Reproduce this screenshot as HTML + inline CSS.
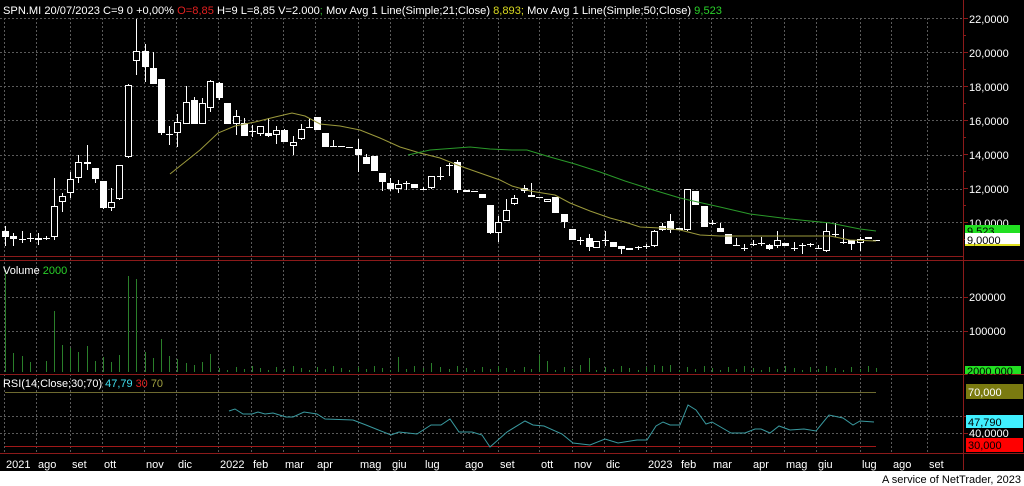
<!DOCTYPE html>
<html><head><meta charset="utf-8"><style>
html,body{margin:0;padding:0;background:#000;width:1024px;height:486px;overflow:hidden}
svg{display:block}
text{font-family:"Liberation Sans",sans-serif;font-size:11px}
</style></head><body>
<svg id="s" width="1024" height="486" viewBox="0 0 1024 486" xmlns="http://www.w3.org/2000/svg">
<rect width="1024" height="486" fill="#000"/>
<g id="grid" stroke="#5a5a5a" stroke-width="1" stroke-dasharray="2,2"></g>
<g stroke="#8b1a1a" stroke-width="1">
<line x1="0" y1="256.5" x2="963" y2="256.5"/>
<line x1="0" y1="260.5" x2="1024" y2="260.5"/>
<line x1="0" y1="374.5" x2="1024" y2="374.5"/>
<line x1="0" y1="453.5" x2="1024" y2="453.5"/>
<line x1="963.5" y1="0" x2="963.5" y2="470"/>
</g>
<g id="ticks" stroke="#8b1a1a"></g>
<g id="vol" stroke="#2a7f2a" stroke-width="1"></g>
<g id="candles"></g>
<polyline fill="none" stroke="#9c9a3c" stroke-width="1" points="170,174 185,162 200,150 218,133 235,126 255,122 275,117 292,113 305,116 320,124 340,126 360,130 380,138 400,147 420,153 440,158 460,166 480,173 500,180 512,186 530,191 555,195 570,203 590,211 610,218 625,222 640,227 660,228 680,230 700,235 720,236 800,236 830,236 850,240 876,241"/>
<polyline fill="none" stroke="#2a9a2a" stroke-width="1" points="408,155 430,150 470,147 490,149 512,150 527,150 550,157 575,164 600,172 625,181 650,189 680,198 720,207 750,214 790,219 830,223 860,229 876,231"/>
<line x1="5" y1="392.5" x2="876" y2="392.5" stroke="#6e6a30"/>
<line x1="5" y1="446.5" x2="876" y2="446.5" stroke="#a01818"/>
<polyline fill="none" stroke="#3a9aa0" stroke-width="1" points="229,411 235,409 243,414 252,414 258,412 265,414 273,413 286,417 293,417 304,412 317,414 325,419 353,420 366,425 391,435 399,432 417,434 431,425 441,425 450,419 459,432 472,432 482,435 490,447 507,432 525,421 533,425 544,426 562,434 573,443 590,445 605,439 618,443 637,440 647,440 656,426 663,422 670,425 680,425 688,405 696,410 706,424 712,422 731,433 745,433 755,429 761,429 770,433 779,426 790,430 804,429 816,431 829,415 843,418 853,425 860,421 874,422"/>
<text x="3" y="14" textLength="719" lengthAdjust="spacingAndGlyphs"><tspan fill="#fff">SPN.MI 20/07/2023 C=9 0 +0,00% </tspan><tspan fill="#e02020">O=8,85</tspan><tspan fill="#fff"> H=9 L=8,85 V=2.000</tspan><tspan fill="#2ab02a">;</tspan><tspan fill="#fff"> Mov Avg 1 Line(Simple;21;Close) </tspan><tspan fill="#d8d820">8,893</tspan><tspan fill="#d8d820">;</tspan><tspan fill="#fff"> Mov Avg 1 Line(Simple;50;Close) </tspan><tspan fill="#2ad02a">9,523</tspan></text>
<text x="3" y="274" fill="#fff">Volume <tspan fill="#2ad02a">2000</tspan></text>
<text x="3" y="387" fill="#fff" textLength="160" lengthAdjust="spacingAndGlyphs">RSI(14;Close;30;70) <tspan fill="#40e0f0">47,79</tspan> <tspan fill="#e02020">30</tspan> <tspan fill="#a0a040">70</tspan></text>
<g fill="#fff">
<text x="969" y="23">22,0000</text><text x="969" y="57">20,0000</text><text x="969" y="91">18,0000</text>
<text x="969" y="125">16,0000</text><text x="969" y="159">14,0000</text><text x="969" y="193">12,0000</text>
<text x="969" y="227">10,0000</text>
<text x="969" y="301">200000</text><text x="969" y="335">100000</text>
<text x="969" y="437">40,0000</text>
</g>
<rect x="965" y="225" width="55" height="8" fill="#22e022"/>
<text x="967" y="235" fill="#000">9,523</text>
<rect x="965" y="233" width="55" height="12" fill="#fff"/>
<rect x="965" y="244" width="55" height="2" fill="#e0e020"/>
<text x="967" y="244" fill="#000">9,0000</text>
<rect x="965" y="366" width="56" height="8" fill="#22e022"/>
<text x="967" y="375" fill="#000">2000,000</text>
<rect x="966" y="384" width="57" height="15" fill="#7a7a10"/>
<text x="968" y="396" fill="#fff">70,000</text>
<rect x="966" y="415" width="57" height="13" fill="#40f0ff"/>
<text x="968" y="426" fill="#000">47,790</text>
<rect x="966" y="438" width="57" height="14" fill="#ff0000"/>
<text x="968" y="449" fill="#000">30,000</text>
<g fill="#fff">
<text x="6" y="468">2021</text><text x="38" y="468">ago</text><text x="72" y="468">set</text><text x="104" y="468">ott</text>
<text x="146" y="468">nov</text><text x="178" y="468">dic</text><text x="220" y="468">2022</text><text x="253" y="468">feb</text>
<text x="285" y="468">mar</text><text x="317" y="468">apr</text><text x="360" y="468">mag</text><text x="392" y="468">giu</text>
<text x="425" y="468">lug</text><text x="465" y="468">ago</text><text x="500" y="468">set</text><text x="541" y="468">ott</text>
<text x="574" y="468">nov</text><text x="606" y="468">dic</text><text x="648" y="468">2023</text><text x="681" y="468">feb</text>
<text x="713" y="468">mar</text><text x="753" y="468">apr</text><text x="786" y="468">mag</text><text x="818" y="468">giu</text>
<text x="862" y="468">lug</text><text x="893" y="468">ago</text><text x="929" y="468">set</text>
</g>
<rect x="0" y="471" width="1024" height="15" fill="#fff"/>
<text x="1021" y="483" fill="#000" text-anchor="end">A service of NetTrader, 2023</text>
</svg>
<script>
var NS="http://www.w3.org/2000/svg";
function el(p,t,a){var e=document.createElementNS(NS,t);for(var k in a)e.setAttribute(k,a[k]);p.appendChild(e);return e;}
var g=document.getElementById("grid");
var vx=[4,36,70,102,144,176,218,251,283,315,358,390,423,463,498,539,572,604,646,679,711,751,784,816,860,891,927];
vx.forEach(function(x){el(g,"line",{x1:x+.5,y1:18,x2:x+.5,y2:453});});
[18,52,86,120,155,189,222,297,331,416,433].forEach(function(y){el(g,"line",{x1:0,y1:y+.5,x2:963,y2:y+.5});});
var tk=document.getElementById("ticks");
for(var y=18;y<256;y+=17)el(tk,"line",{x1:963,y1:y+.5,x2:(((y-18)/17)%2==0?968:966),y2:y+.5});
[297,331,416,433].forEach(function(y){el(tk,"line",{x1:963,y1:y+.5,x2:968,y2:y+.5});});
var C=[[5,231,237,1,226,246],[13,236,239,1,233,246],[22,239,240,1,231,243],[30,238,239,1,233,242],[38,238,240,0,233,245],[46,238,239,1,236,240],
[54,206,237,0,178,240],[62,196,202,0,193,212],[70,179,193,0,172,198],[78,162,178,0,155,183],[87,162,164,1,145,170],[95,168,179,1,168,183],
[103,181,208,1,181,209],[111,202,208,0,188,211],[119,165,199,0,165,200],[128,85,157,0,84,158],[136,51,61,0,19,75],[145,51,67,1,44,82],
[153,68,84,1,52,84],[161,79,133,1,79,135],[169,134,135,1,126,145],[177,122,133,0,114,147],[186,102,124,0,86,124],[194,100,124,1,97,124],
[202,103,124,0,98,124],[210,81,108,0,80,112],[219,83,98,1,82,100],[227,103,124,1,103,124],[236,116,124,0,110,135],[244,123,136,1,118,136],
[252,131,132,1,125,137],[260,126,134,0,126,136],[268,133,136,1,118,137],[276,130,135,0,126,144],[284,130,142,1,129,142],[293,142,146,0,136,155],
[301,129,139,0,124,140],[309,127,128,1,118,128],[317,117,130,1,117,130],[325,133,147,1,133,147],[333,146,147,1,140,147],[341,146,147,1,146,147],
[349,147,148,1,147,148],[358,149,155,1,139,172],[366,157,164,1,154,164],[374,156,171,1,156,171],[382,173,182,1,173,191],[390,183,189,1,178,191],
[398,184,189,0,180,193],[406,183,184,1,181,190],[414,184,188,1,184,188],[423,189,190,1,187,190],[431,176,188,0,176,189],[440,176,177,1,167,180],
[449,165,166,1,163,176],[457,162,190,1,160,193],[466,190,192,1,190,192],[474,191,192,1,191,192],[482,194,198,1,194,198],[490,205,233,1,205,234],
[498,222,233,0,216,242],[506,210,221,0,199,221],[514,198,204,0,195,205],[524,188,191,1,185,193],[531,195,197,1,183,197],[539,197,198,1,197,198],
[547,199,202,0,199,202],[555,197,213,1,197,213],[564,214,222,1,214,228],[572,229,240,1,229,240],[580,240,241,1,237,245],[589,238,247,1,234,251],
[596,241,248,0,241,248],[605,240,241,1,231,246],[613,242,247,1,242,247],[621,246,249,1,246,254],[629,248,250,0,248,250],[638,247,248,0,246,250],
[646,246,247,1,244,249],[654,231,246,0,230,247],[662,226,230,1,223,231],[670,221,230,1,214,233],[679,228,230,0,228,230],[687,189,230,0,189,231],
[695,191,205,1,191,205],[704,206,227,1,206,227],[712,223,224,1,220,225],[720,228,232,1,223,232],[728,234,244,1,234,244],[736,245,246,1,238,246],
[744,248,249,1,244,251],[753,244,245,1,240,246],[761,243,244,1,237,246],[769,245,249,1,244,250],[777,240,246,0,231,248],[785,243,246,1,243,246],
[794,248,249,1,242,251],[802,245,246,1,243,254],[810,244,245,1,243,247],[818,248,249,1,245,249],[826,231,251,0,223,252],[835,234,235,1,223,237],
[843,242,243,1,229,244],[851,240,244,1,240,250],[860,239,243,0,237,251],[868,237,239,1,237,239],[876,240,241,0,240,241]];
var cg=document.getElementById("candles");
C.forEach(function(c){var x=c[0];
el(cg,"line",{x1:x+.5,y1:c[4],x2:x+.5,y2:c[5],stroke:"#fff"});
var h=Math.max(1,c[2]-c[1]);
if(c[3]||h<=1)el(cg,"rect",{x:x-3,y:c[1],width:7,height:h,fill:"#fff"});
else el(cg,"rect",{x:x-2.5,y:c[1]+.5,width:6,height:h-1,fill:"#000",stroke:"#fff"});
});
var V={5:270,13:353,22:356,30:362,46:361,54:311,62:345,70:348,78:352,87:346,95:361,103:357,111:362,119:355,128:276,136:279,145:352,153:358,161:339,169:356,177:359,186:363,194:365,202:362,210:354,398:357,431:363,539:355,547:361,580:365,589:358,637:343,654:365,670:365,829:363};
var vg=document.getElementById("vol");
C.forEach(function(c,i){var x=c[0];if(x==38)return;var t=V[x]||(366+((i*37)%5));
el(vg,"line",{x1:x+.5,y1:t,x2:x+.5,y2:372});});
</script>
</body></html>
